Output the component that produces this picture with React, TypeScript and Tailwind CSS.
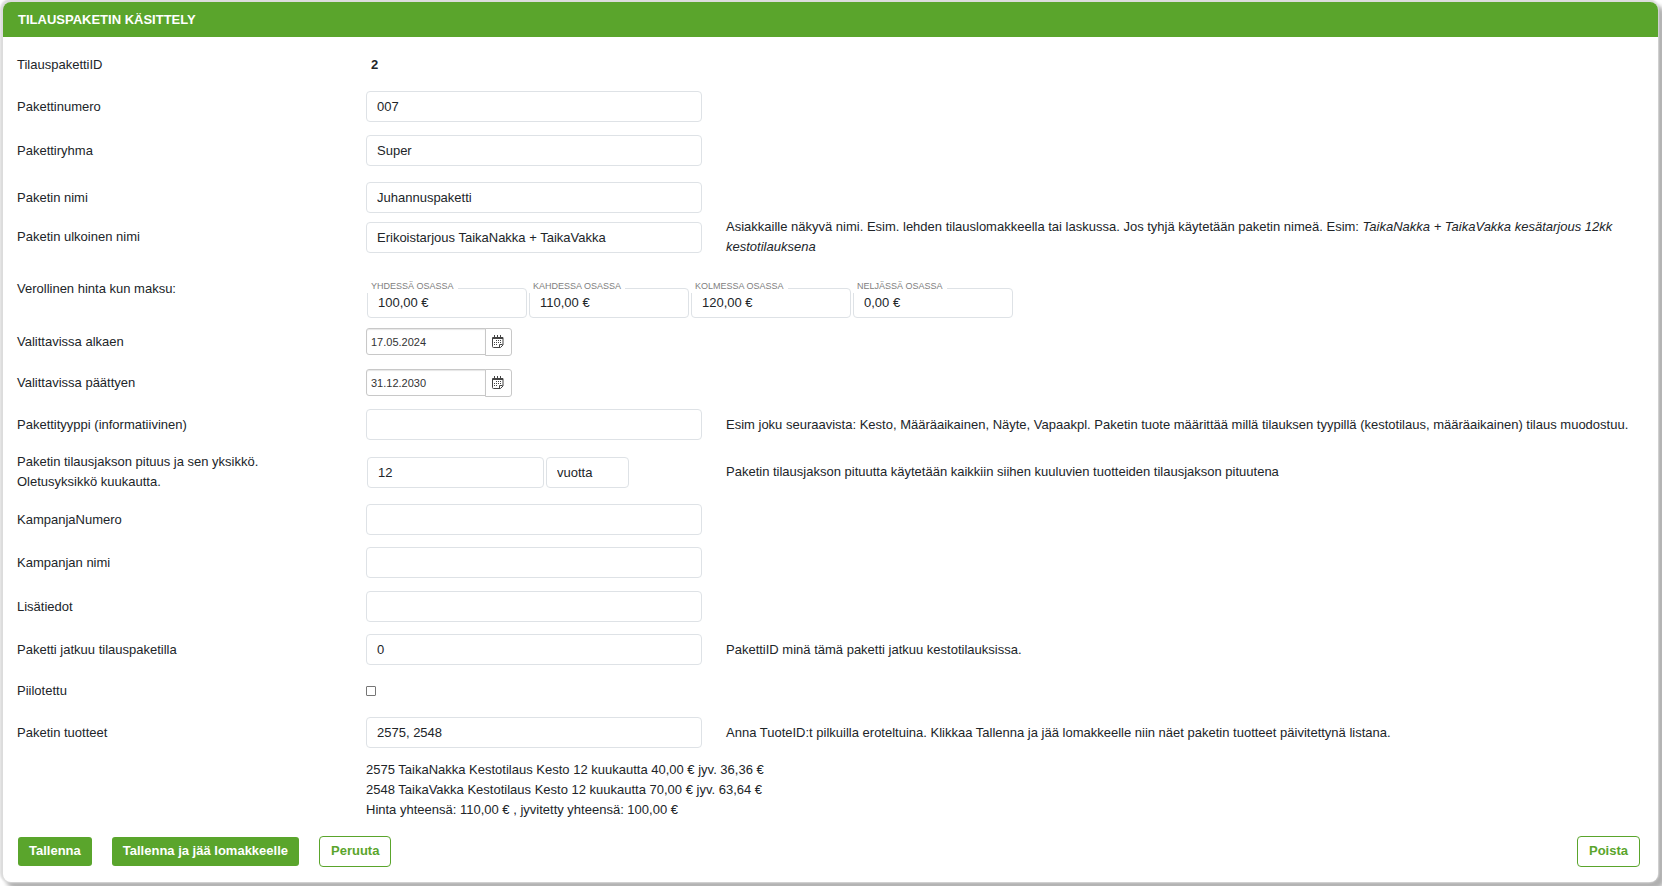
import { ReactNode, useState } from "react";

const inputClass =
  "rounded border border-[#dee2e6] bg-white px-[10px] text-[#212529] outline-none focus:border-[#5aa52c]";

type FieldRowProps = {
  label: ReactNode;
  htmlFor?: string;
  help?: ReactNode;
  className?: string;
  children: ReactNode;
};

function FieldRow({ label, htmlFor, help, className = "", children }: FieldRowProps) {
  return (
    <div className={`grid grid-cols-[325px_336px_1fr] items-center gap-x-6 ${className}`}>
      {htmlFor ? <label htmlFor={htmlFor}>{label}</label> : <span>{label}</span>}
      <div className="flex items-center">{children}</div>
      {help && <p>{help}</p>}
    </div>
  );
}

function CalendarIcon() {
  return (
    <svg width="13" height="14" viewBox="0 0 13 14" fill="none" stroke="#444">
      <path d="M.5 2.500v9q0 1 1 1h7l2.500-2.500v-7.500" />
      <path d="M.5 3h10.500" strokeWidth="2" />
      <path d="M2.500 0v2M5.500 0v2M8.500 0v2" />
      <path d="M4 5.500h1M6 5.500h1M8 5.500h1M2 7.500h1M4 7.500h1M6 7.500h1M8 7.500h1M2 9.500h1M4 9.500h1M7.500 12v-2.500h3" />
    </svg>
  );
}

function DateField({ id, initial }: { id: string; initial: string }) {
  const [value, setValue] = useState(initial);

  return (
    <div className="flex">
      <input
        id={id}
        type="text"
        value={value}
        onChange={(e) => setValue(e.target.value)}
        className="h-[27px] w-[120px] rounded-l-[3px] border border-[#c8c8c8] px-1 text-[11px] text-[#333] shadow-[inset_0_1px_1px_rgba(0,0,0,0.1)] outline-none"
      />
      <button
        type="button"
        aria-label="Valitse päivä"
        className="-ml-px flex h-[28px] w-[27px] items-center justify-center rounded-r-[3px] border border-[#c8c8c8] bg-white"
      >
        <CalendarIcon />
      </button>
    </div>
  );
}

const prices = [
  { id: "price1", label: "YHDESSÄ OSASSA", value: "100,00 €" },
  { id: "price2", label: "KAHDESSA OSASSA", value: "110,00 €" },
  { id: "price3", label: "KOLMESSA OSASSA", value: "120,00 €" },
  { id: "price4", label: "NELJÄSSÄ OSASSA", value: "0,00 €" },
];

export default function App() {
  const [hidden, setHidden] = useState(false);

  return (
    <div className="bg-white pt-[2px] pr-1 pb-[5px] pl-[3px] font-['Liberation_Sans',Arial,sans-serif] text-[13px] leading-5 text-[#212529]">
      <form
        onSubmit={(e) => e.preventDefault()}
        className="rounded-lg bg-white shadow-[-1px_-1px_2px_2px_#dcdcdc,5px_5px_4px_2px_#b0b0b0]"
      >
        <h1 className="rounded-t-lg bg-[#5aa52c] px-[15px] pt-2 pb-[7px] font-bold text-white">
          TILAUSPAKETIN KÄSITTELY
        </h1>

        <div className="px-[14px] pt-[18px] pb-[15px]">
          <FieldRow label="TilauspakettiID" className="mb-4">
            <span className="pl-[5px] font-bold">2</span>
          </FieldRow>
          <FieldRow label="Pakettinumero" htmlFor="number" className="mb-[13px]">
            <input id="number" type="text" defaultValue="007" className={`${inputClass} h-[31px] w-full`} />
          </FieldRow>
          <FieldRow label="Pakettiryhma" htmlFor="group" className="mb-4">
            <input id="group" type="text" defaultValue="Super" className={`${inputClass} h-[31px] w-full`} />
          </FieldRow>
          <FieldRow label="Paketin nimi" htmlFor="name" className="mb-1">
            <input
              id="name"
              type="text"
              defaultValue="Juhannuspaketti"
              className={`${inputClass} h-[31px] w-full`}
            />
          </FieldRow>
          <FieldRow
            label="Paketin ulkoinen nimi"
            htmlFor="publicName"
            className="mb-[22px]"
            help={
              <>
                Asiakkaille näkyvä nimi. Esim. lehden tilauslomakkeella tai laskussa. Jos tyhjä käytetään paketin nimeä. Esim:{" "}
                <em>TaikaNakka + TaikaVakka kesätarjous 12kk kestotilauksena</em>
              </>
            }
          >
            <input
              id="publicName"
              type="text"
              defaultValue="Erikoistarjous TaikaNakka + TaikaVakka"
              className={`${inputClass} h-[31px] w-full`}
            />
          </FieldRow>

          <div className="mb-[10px] grid grid-cols-[325px_1fr] gap-x-6">
            <span>Verollinen hinta kun maksu:</span>
            <div className="flex gap-[2px] pt-[9px] pl-px">
              {prices.map((price) => (
                <div key={price.id} className="relative">
                  <label
                    htmlFor={price.id}
                    className="absolute -top-2 left-0 bg-white pr-1 pl-1 text-[9px] leading-[13px] text-[#808080]"
                  >
                    {price.label}
                  </label>
                  <input
                    id={price.id}
                    type="text"
                    defaultValue={price.value}
                    className={`${inputClass} h-[30px] w-40 pb-[2px]`}
                  />
                </div>
              ))}
            </div>
          </div>

          <FieldRow label="Valittavissa alkaen" htmlFor="validFrom" className="mb-[13px]">
            <DateField id="validFrom" initial="17.05.2024" />
          </FieldRow>
          <FieldRow label="Valittavissa päättyen" htmlFor="validTo" className="mb-3">
            <DateField id="validTo" initial="31.12.2030" />
          </FieldRow>
          <FieldRow
            label="Pakettityyppi (informatiivinen)"
            htmlFor="type"
            className="mb-3"
            help="Esim joku seuraavista: Kesto, Määräaikainen, Näyte, Vapaakpl. Paketin tuote määrittää millä tilauksen tyypillä (kestotilaus, määräaikainen) tilaus muodostuu."
          >
            <input id="type" type="text" className={`${inputClass} h-[31px] w-full`} />
          </FieldRow>
          <FieldRow
            label={
              <>
                Paketin tilausjakson pituus ja sen yksikkö.
                <br />
                Oletusyksikkö kuukautta.
              </>
            }
            htmlFor="period"
            className="mb-3"
            help="Paketin tilausjakson pituutta käytetään kaikkiin siihen kuuluvien tuotteiden tilausjakson pituutena"
          >
            <div className="flex gap-[2px] pl-px">
              <input
                id="period"
                type="text"
                defaultValue="12"
                className={`${inputClass} h-[31px] w-[177px]`}
              />
              <input
                type="text"
                aria-label="Yksikkö"
                defaultValue="vuotta"
                className={`${inputClass} h-[31px] w-[83px]`}
              />
            </div>
          </FieldRow>
          <FieldRow label="KampanjaNumero" htmlFor="campaignNumber" className="mb-3">
            <input id="campaignNumber" type="text" className={`${inputClass} h-[31px] w-full`} />
          </FieldRow>
          <FieldRow label="Kampanjan nimi" htmlFor="campaignName" className="mb-[13px]">
            <input id="campaignName" type="text" className={`${inputClass} h-[31px] w-full`} />
          </FieldRow>
          <FieldRow label="Lisätiedot" htmlFor="info" className="mb-3">
            <input id="info" type="text" className={`${inputClass} h-[31px] w-full`} />
          </FieldRow>
          <FieldRow
            label="Paketti jatkuu tilauspaketilla"
            htmlFor="nextPackage"
            className="mb-4"
            help="PakettiID minä tämä paketti jatkuu kestotilauksissa."
          >
            <input
              id="nextPackage"
              type="text"
              defaultValue="0"
              className={`${inputClass} h-[31px] w-full`}
            />
          </FieldRow>
          <FieldRow label="Piilotettu" htmlFor="hidden" className="mb-4">
            <input
              id="hidden"
              type="checkbox"
              checked={hidden}
              onChange={(e) => setHidden(e.target.checked)}
              className="size-[10px] appearance-none rounded-[1px] border border-[#767676] bg-white checked:bg-[#5aa52c]"
            />
          </FieldRow>
          <FieldRow
            label="Paketin tuotteet"
            htmlFor="products"
            className="mb-3"
            help="Anna TuoteID:t pilkuilla eroteltuina. Klikkaa Tallenna ja jää lomakkeelle niin näet paketin tuotteet päivitettynä listana."
          >
            <input
              id="products"
              type="text"
              defaultValue="2575, 2548"
              className={`${inputClass} h-[31px] w-full`}
            />
          </FieldRow>

          <div className="mb-4 pl-[349px]">
            <p>2575 TaikaNakka Kestotilaus Kesto 12 kuukautta 40,00 € jyv. 36,36 €</p>
            <p>2548 TaikaVakka Kestotilaus Kesto 12 kuukautta 70,00 € jyv. 63,64 €</p>
            <p>Hinta yhteensä: 110,00 € , jyvitetty yhteensä: 100,00 €</p>
          </div>

          <div className="flex items-center pr-1 pl-px font-bold">
            <button type="submit" className="mr-5 h-[29px] rounded-[3px] bg-[#5aa52c] px-[11px] pb-[2px] text-white">
              Tallenna
            </button>
            <button type="submit" className="mr-5 h-[29px] rounded-[3px] bg-[#5aa52c] px-[11px] pb-[2px] text-white">
              Tallenna ja jää lomakkeelle
            </button>
            <button
              type="button"
              className="h-[31px] rounded border border-[#5aa52c] px-[11px] pb-[2px] text-[#5aa52c]"
            >
              Peruuta
            </button>
            <button
              type="button"
              className="ml-auto h-[31px] rounded border border-[#5aa52c] px-[11px] pb-[2px] text-[#5aa52c]"
            >
              Poista
            </button>
          </div>
        </div>
      </form>
    </div>
  );
}
